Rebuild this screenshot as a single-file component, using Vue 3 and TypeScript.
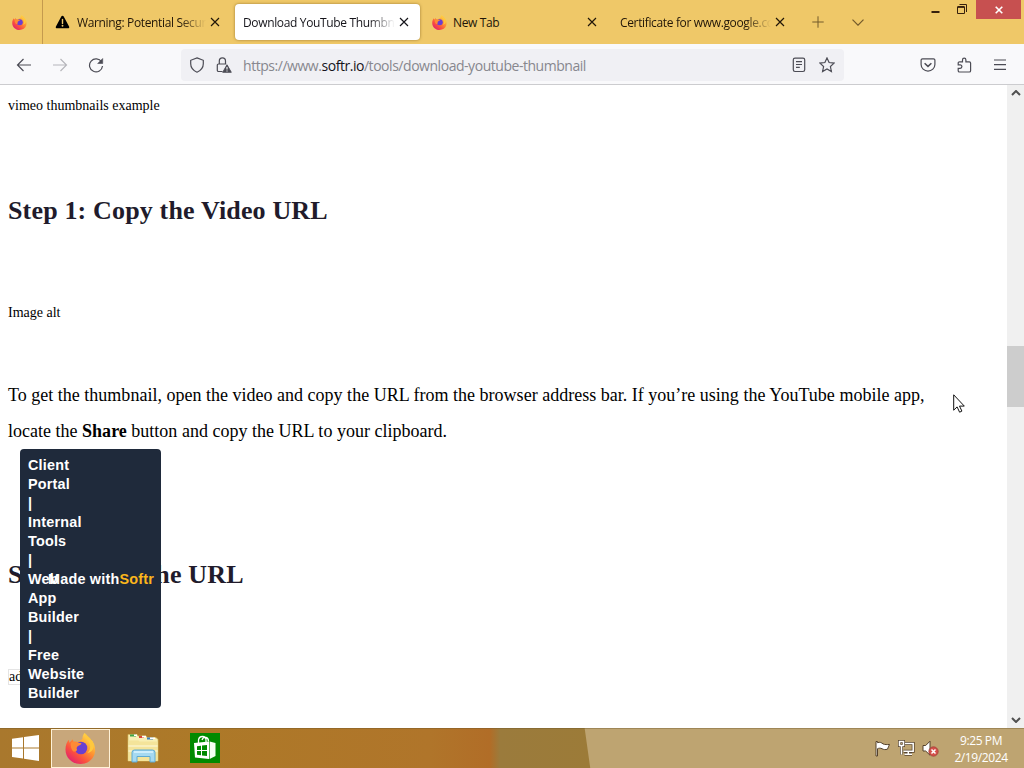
<template>
  <div class="screen">
    <header class="tabbar">
      <div class="pinned"><FirefoxIcon class="tab-fox" /></div>
      <div
        v-for="tab in tabs"
        :key="tab.title"
        :class="['tab', tab.size, { active: tab.active }]"
      >
        <svg v-if="tab.icon === 'warning'" class="warn" viewBox="0 0 16 16">
          <path
            d="M8 1.2c.6 0 1 .3 1.3.8l5.7 10.8c.6 1.1 0 1.9-1.2 1.9H2.2C1 14.7.4 13.9 1 12.8L6.7 2c.3-.5.7-.8 1.3-.8z"
          />
          <path d="M8 5.3v4.2" stroke="#f0c96b" stroke-width="1.5" stroke-linecap="round" />
          <circle cx="8" cy="12" r="1" fill="#f0c96b" />
        </svg>
        <FirefoxIcon v-if="tab.icon === 'firefox'" class="tab-fox" />
        <span :class="['tab-title', { faded: tab.faded }]">{{ tab.title }}</span>
        <svg class="tab-close" viewBox="0 0 10 10"><path d="M1 1l8 8M9 1L1 9" /></svg>
      </div>
      <svg class="new-tab" viewBox="0 0 12 12"><path d="M6 .3v11.4M.3 6h11.4" /></svg>
      <svg class="all-tabs" viewBox="0 0 12 7"><path d="M.5.7L6 6.2 11.5.7" /></svg>
      <div class="win-controls">
        <svg class="minimize" viewBox="0 0 8 2"><path d="M0 1h8" /></svg>
        <svg class="restore" viewBox="0 0 10 10">
          <path d="M.5 3h7v6.5h-7z" />
          <path d="M.5 2.9h7" stroke-width="1.8" />
          <path d="M2.5.5h7V8" />
        </svg>
        <button class="win-close">
          <svg viewBox="0 0 8 8"><path d="M.7.7l6.6 6.6M7.3.7L.7 7.3" /></svg>
        </button>
      </div>
    </header>

    <nav class="toolbar">
      <svg class="icon back" viewBox="0 0 16 16"><path d="M15 8H1.5M7.5 2l-6 6 6 6" /></svg>
      <svg class="icon forward" viewBox="0 0 16 16"><path d="M1 8h13.5M8.5 2l6 6-6 6" /></svg>
      <svg class="icon reload" viewBox="0 0 16 16">
        <path d="M13.6 5A6.5 6.5 0 1 0 14.500 9" />
        <path d="M14.7 1.500v5h-5z" fill="#4c4c55" stroke-width=".6" />
      </svg>
      <div class="urlbar">
        <svg class="icon shield" viewBox="0 0 16 16">
          <path d="M8 .9l6.3 2.4v3.5c0 3.9-2.4 6.7-6.3 8.4-3.9-1.7-6.3-4.5-6.3-8.4V3.300z" />
        </svg>
        <svg class="icon lock" viewBox="0 0 16 16">
          <path d="M6.5 14.5h-4a1.2 1.2 0 0 1-1.2-1.2V8.200A1.200 1.200 0 0 1 2.500 7h7.800M3.300 7V4a3 3 0 0 1 6.200 0v3" />
          <path d="M11 7.800l4.300 7.500H6.700z" fill="#4c4c55" stroke-width=".9" stroke-linejoin="round" />
          <path d="M11 10v2.500M11 13.400v1" stroke="#fff" stroke-width="1.1" />
        </svg>
        <span class="url">https://www.<b>softr.io</b>/tools/download-youtube-thumbnail</span>
        <svg class="icon reader" viewBox="0 0 16 16">
          <rect x="2.3" y="1.1" width="11.4" height="13.4" rx="1.7" />
          <path d="M5 4.700h6M5 7.500h6M5 10.300h3.800" />
        </svg>
        <svg class="icon star" viewBox="0 0 16 16">
          <path d="M8 .9l2.100 4.600 5 .6-3.700 3.400 1 5L8 12l-4.400 2.500 1-5L.9 6.100l5-.6z" />
        </svg>
      </div>
      <svg class="icon pocket" viewBox="0 0 16 16">
        <path d="M2.500 1.800h11a1.400 1.400 0 0 1 1.400 1.400v4.300a6.900 6.600 0 0 1-13.800 0V3.200a1.400 1.400 0 0 1 1.400-1.400z" />
        <path d="M4.600 6.200L8 9.400l3.400-3.200" stroke-width="1.5" />
      </svg>
      <svg class="icon puzzle" viewBox="0 0 16 16">
        <path
          d="M3.500 4.800h3V2.900a1.700 1.700 0 0 1 3.400 0v1.900h3.400a1.300 1.300 0 0 1 1.300 1.300v7.600a1.300 1.300 0 0 1-1.300 1.300H3.500a1.300 1.300 0 0 1-1.300-1.300v-2.400h2a1.700 1.700 0 0 0 0-3.400h-2V6.100a1.300 1.300 0 0 1 1.300-1.300z"
        />
      </svg>
      <svg class="icon menu" viewBox="0 0 16 16"><path d="M2 3h12M2 7.700h12M2 12.400h12" /></svg>
    </nav>

    <main class="viewport">
      <article class="page">
        <p class="alt">vimeo thumbnails example</p>
        <h2>Step 1: Copy the Video URL</h2>
        <p class="alt alt-image">Image alt</p>
        <p class="body">
          To get the thumbnail, open the video and copy the URL from the browser address bar. If
          you’re using the YouTube mobile app,<br />locate the <b>Share</b> button and copy the URL
          to your clipboard.
        </p>
        <h2 class="step-add">Step 2: Add the URL</h2>
        <p class="alt alt-add">ad</p>
      </article>
      <aside class="badge">
        <span v-for="(line, i) in badgeLines" :key="i">{{ line }}</span>
        <div class="made">Made with<em>Softr</em></div>
      </aside>
      <div class="scrollbar">
        <svg viewBox="0 0 10 6"><path d="M1 5l4-4 4 4" /></svg>
        <div class="thumb"></div>
        <svg viewBox="0 0 10 6"><path d="M1 1l4 4 4-4" /></svg>
      </div>
      <svg class="cursor" viewBox="0 0 12 19">
        <path d="M.7.8v15.400l3.400-3.300 2.500 5.300 2.300-1.100-2.400-5h4.800z" />
      </svg>
    </main>

    <footer class="taskbar">
      <svg class="start" viewBox="0 0 27 26">
        <path d="M0 3.800l11-1.600v10.200H0zM12 2l15-2v12.400H12zM0 13.400h11v10.200L0 22zM12 13.400h15V26l-15-2.200z" />
      </svg>
      <div class="task-active"><FirefoxIcon class="task-fox" /></div>
      <svg class="explorer" viewBox="0 0 32 30">
        <path d="M1 4V1.500h9L11 3h8l1 1.500h9l2 2V28H1z" fill="#f8efb3" stroke="#d3b75c" stroke-width=".7" />
        <path d="M3 1.500h6v2H3z" fill="#3da547" />
        <path d="M12 3h5v2h-5z" fill="#d84635" />
        <path d="M20 4.500h6v2h-6z" fill="#3c7fc0" />
        <path d="M7 2.200h3M15 3.600h4M23 5.200h5" stroke="#fff" stroke-width="1.6" />
        <path d="M1.500 7.500h10l1 1h18V28h-29z" fill="#f4e49a" />
        <path d="M1.500 13h29M1.500 18h29" stroke="#f9efbd" stroke-width="2" />
        <path d="M5 29V19.500q0-2.500 2.500-2.500h18q2.500 0 2.500 2.500V29h-5v-5.500H10V29z" fill="#a5d9f1" stroke="#5eaad2" />
        <path d="M7 19h19" stroke="#ddf5ff" stroke-width="1.5" />
      </svg>
      <svg class="store" viewBox="0 0 30 30">
        <path d="M0 0h30v30H0z" fill="#008a00" />
        <path d="M4 10l15-1.500V26L5 24.500z" fill="#fff" />
        <path d="M19.600 8.500L25.500 10v13l-5.900 3z" fill="#f4fff2" />
        <path d="M8.500 10V7q.5-3.500 4-3.500T16 7v2.500M12 7q1-3 4-2.500 2.500.5 2.500 4" fill="none" stroke="#fff" stroke-width="1.3" />
        <path d="M7 13.200l4-.5v4.400H7zM12 12.600l5-.6v5.100h-5zM7 18h4v4.200l-4-.4zM12 18h5v5l-5-.6z" fill="#008a00" />
      </svg>
      <div class="tray">
        <svg class="flag" viewBox="0 0 17 17">
          <path d="M2 16V1.500h1.500v1.200c2.500-1 4 0 5.500 1.200 2 .8 4 .8 6.500.5-1 2-1.200 3-2 4.800-2 .6-4 .5-5.500-.5-1.500-.7-3-.7-4.500 0V16z" />
        </svg>
        <svg class="network" viewBox="0 0 17 17">
          <g fill="none">
            <path d="M5.500 3.500h9.700v7.700H5.500M10.300 11.200v3M6.500 14.300h7.500" stroke="#55422c" stroke-width="3" />
            <path d="M5.500 3.500h9.700v7.700H5.500M10.300 11.200v3M6.500 14.300h7.500" stroke="#fff" stroke-width="1.5" />
            <path d="M1.500 1.500h4v4h-4zM3.500 5.500v9" stroke="#55422c" stroke-width="3" />
            <path d="M1.500 1.500h4v4h-4zM3.500 5.500v9" stroke="#fff" stroke-width="1.6" />
          </g>
        </svg>
        <svg class="sound" viewBox="0 0 17 17">
          <path d="M1 5.500h2.700L8 1.200v14L3.700 11H1z" fill="#fff" stroke="#55422c" />
          <circle cx="11.5" cy="11.5" r="4.700" fill="#d4514b" stroke="#9c3a34" stroke-width=".7" />
          <path d="M9.500 9.500l4 4M13.500 9.500l-4 4" stroke="#fff" stroke-width="1.5" />
        </svg>
        <div class="clock"><span>9:25 PM</span><span>2/19/2024</span></div>
      </div>
    </footer>
  </div>
</template>

<script setup lang="ts">
import { defineComponent, h } from 'vue'

interface Tab {
  title: string
  size: string
  icon?: 'warning' | 'firefox'
  active?: boolean
  faded?: boolean
}

const tabs: Tab[] = [
  { title: 'Warning: Potential Security', size: 'tab-warning', icon: 'warning', faded: true },
  { title: 'Download YouTube Thumbnails', size: 'tab-softr', active: true, faded: true },
  { title: 'New Tab', size: 'tab-plain', icon: 'firefox' },
  { title: 'Certificate for www.google.com', size: 'tab-plain', faded: true },
]

const badgeLines = [
  'Client', 'Portal', '|', 'Internal', 'Tools', '|', 'Web',
  'App', 'Builder', '|', 'Free', 'Website', 'Builder',
]

const FirefoxIcon = defineComponent(() => () =>
  h('svg', { viewBox: '0 0 32 32' }, [
    h('defs', [
      h('linearGradient', { id: 'fox-body', x1: '0.85', y1: '0.1', x2: '0.2', y2: '0.9' }, [
        h('stop', { offset: '0', 'stop-color': '#ffe14d' }),
        h('stop', { offset: '.4', 'stop-color': '#ff9430' }),
        h('stop', { offset: '.75', 'stop-color': '#fa4d40' }),
        h('stop', { offset: '1', 'stop-color': '#e52868' }),
      ]),
    ]),
    h('path', {
      fill: 'url(#fox-body)',
      d: 'M20 0c3 2 4 5 6 7l2 1c3 4 4 9 2.5 14C28.500 28 23 32 16 32 7 32 .5 25.500.5 17 .5 13 2 9 4 7l.5 3L8 6.500l1 3 4 .5c2-3 4-2 5-4 0-2 .5-4 2-6z',
    }),
    h('circle', { cx: '16.5', cy: '15.5', r: '6.5', fill: '#6a3fd0' }),
    h('path', {
      fill: '#ff8a34',
      d: 'M6 10c3-2 6-1 8 0l3 .5c0 1.500-2.500 2-3.500 3-1.500 1-2 2.500-1 4-1 1.500-2.500 2-4 1.500C6.500 17 5.500 13 6 10z',
    }),
    h('path', { fill: '#ffc83d', d: 'M20 0c1 5 6 8 6 14 0 3-1 5-3 7 8-2 8-10 4-14-1-2-4-4-7-7z' }),
  ]),
)
</script>

<style scoped>
.screen {
  width: 1024px;
  height: 768px;
  overflow: hidden;
  display: flex;
  flex-direction: column;
  background: #fff;
  font-family: 'Open Sans', 'Noto Sans', sans-serif;
}

svg {
  display: block;
  flex: none;
}

.tabbar {
  height: 44px;
  flex: none;
  display: flex;
  align-items: center;
  background: #efc868;
  color: #211608;
}

.pinned {
  width: 43px;
  flex: none;
  height: 44px;
  box-sizing: border-box;
  border-right: 1px solid #c49a4e;
  padding: 15px 0 0 12px;
}

.tab-fox {
  width: 15px;
  height: 15px;
  margin-right: 6px;
}

.tab {
  display: flex;
  flex: none;
  align-items: center;
  height: 36px;
  box-sizing: border-box;
  font-size: 12px;
  letter-spacing: -0.35px;
}

.tab.active {
  background: #fff;
  border-radius: 4px;
  box-shadow: 0 0 3px rgba(100, 70, 10, 0.6);
  color: #15141a;
}

.tab-warning {
  width: 192px;
  padding: 0 15px 0 12px;
}

.tab-softr {
  width: 185px;
  padding: 0 11px 0 8px;
}

.tab-plain {
  width: 188px;
  padding: 0 11px 0 12px;
}

.warn {
  width: 15px;
  height: 16px;
  margin-right: 7px;
}

.tab-title {
  flex: 1;
  min-width: 0;
  overflow: hidden;
  white-space: nowrap;
  margin-right: 4px;
}

.tab-title.faded {
  mask-image: linear-gradient(to left, transparent, #000 26px);
}

.tab-close {
  width: 10px;
  height: 10px;
  fill: none;
  stroke: currentColor;
  stroke-width: 1.15;
}

.new-tab {
  width: 12px;
  height: 12px;
  margin-left: 16px;
  fill: none;
  stroke: #725a2b;
}

.all-tabs {
  width: 12px;
  height: 7px;
  margin-left: 28px;
  fill: none;
  stroke: #725a2b;
  stroke-width: 1.2;
}

.win-controls {
  display: flex;
  margin-left: auto;
  align-self: flex-start;
  fill: none;
  stroke: #36200d;
}

.minimize {
  width: 9px;
  height: 2px;
  margin: 11px 17px 0 0;
  stroke-width: 2;
}

.restore {
  width: 10px;
  height: 10px;
  margin: 4px 9px 0 0;
}

.win-close {
  width: 45px;
  height: 19px;
  padding: 0;
  border: 0;
  background: #c75050;
  display: flex;
  align-items: center;
  justify-content: center;
  margin-right: 3px;
}

.win-close svg {
  width: 8px;
  height: 8px;
  fill: none;
  stroke: #fff;
  stroke-width: 1.6;
}

.toolbar {
  height: 41px;
  flex: none;
  box-sizing: border-box;
  display: flex;
  align-items: center;
  background: #f9f9fb;
  border-bottom: 1px solid #cccccf;
  padding: 1px 16px 0;
}

.icon {
  width: 16px;
  height: 16px;
  fill: none;
  stroke: #4c4c55;
  stroke-width: 1.2;
}

.forward {
  margin-left: 20px;
  opacity: 0.38;
}

.reload {
  margin-left: 20px;
}

.urlbar {
  width: 663px;
  height: 32px;
  box-sizing: border-box;
  margin: 0 76px 0 77px;
  padding: 0 9px 0 8px;
  display: flex;
  align-items: center;
  background: #f0f0f4;
  border-radius: 4px;
}

.lock {
  margin-left: 11px;
}

.url {
  flex: 1;
  margin-left: 11px;
  padding-top: 1px;
  color: #87878e;
  font-size: 14px;
  letter-spacing: -0.46px;
  white-space: nowrap;
}

.url b {
  font-weight: 400;
  color: #15141a;
}

.star {
  margin-left: 12px;
}

.puzzle {
  margin-left: 20px;
}

.menu {
  margin-left: 20px;
}

.viewport {
  flex: 1;
  min-height: 0;
  display: flex;
  position: relative;
  background: #fff;
}

.page {
  flex: 1;
  padding: 13px 8px 0;
  font-family: 'Liberation Serif', serif;
  color: #000;
  overflow: hidden;
}

.alt {
  margin: 0;
  font-size: 14px;
  line-height: 16px;
}

h2 {
  margin: 81px 0 0;
  font-size: 26px;
  line-height: 32px;
  letter-spacing: 0.16px;
  color: #211b2b;
}

.alt-image {
  margin-top: 78px;
}

.body {
  margin: 56px 0 0;
  font-size: 18px;
  line-height: 36px;
  letter-spacing: 0.01px;
  white-space: nowrap;
}

.step-add {
  margin-top: 110px;
}

.alt-add {
  width: 28px;
  margin-top: 78px;
  padding-left: 1px;
  outline: 1px solid #e4e4e4;
  outline-offset: -1px;
}

.badge {
  position: absolute;
  left: 20px;
  top: 364px;
  width: 141px;
  height: 259px;
  box-sizing: border-box;
  padding: 7px 8px;
  display: flex;
  flex-direction: column;
  background: #1f2a3b;
  border-radius: 4px;
  color: #fff;
  font: bold 14.4px/19px 'Liberation Sans', Arial, sans-serif;
  letter-spacing: 0.2px;
}

.made {
  position: absolute;
  right: 7px;
  top: 121px;
  white-space: nowrap;
}

.made em {
  font-style: normal;
  color: #fbb61c;
}

.scrollbar {
  width: 17px;
  box-sizing: border-box;
  padding: 5px 0;
  display: flex;
  flex-direction: column;
  align-items: center;
  background: #f0f0f0;
}

.scrollbar svg {
  width: 10px;
  height: 6px;
  fill: none;
  stroke: #505050;
  stroke-width: 2;
}

.thumb {
  width: 17px;
  height: 61px;
  margin: 250px 0 auto;
  background: #cdcdcd;
}

.cursor {
  position: absolute;
  left: 953px;
  top: 309px;
  width: 12px;
  height: 19px;
  fill: #fff;
  stroke: #111;
}

.taskbar {
  height: 40px;
  flex: none;
  display: flex;
  align-items: center;
  background:
    linear-gradient(82deg, transparent 584px, #bea471 585px),
    linear-gradient(90deg, #a9782d, #ad7928 200px, #b0752a 430px, #b16d27 490px, #9b7b3c 500px, #9c7b38 590px, #9c7b38);
  box-shadow: inset 0 1px rgba(100, 80, 40, 0.35);
}

.start {
  width: 27px;
  height: 26px;
  margin-left: 12px;
  fill: #fff;
}

.task-active {
  width: 59px;
  height: 39px;
  margin: 0 0 0 12px;
  box-sizing: border-box;
  border: 1px solid #fff2d8;
  background: #c8a77b;
  display: flex;
  align-items: center;
  justify-content: center;
}

.task-fox {
  width: 31px;
  height: 31px;
}

.explorer {
  width: 32px;
  height: 30px;
  margin-left: 17px;
}

.store {
  width: 30px;
  height: 30px;
  margin-left: 31px;
}

.tray {
  margin-left: auto;
  display: flex;
  align-items: center;
}

.tray svg {
  width: 17px;
  height: 17px;
  margin-right: 7px;
}

.flag {
  fill: #fff;
  stroke: #55422c;
}

.clock {
  width: 54px;
  margin: 1px 16px 0 8px;
  display: flex;
  flex-direction: column;
  align-items: center;
  font-size: 12px;
  line-height: 17px;
  letter-spacing: -0.4px;
  color: #fff;
  white-space: nowrap;
}
</style>

<style>
body {
  margin: 0;
  overflow: hidden;
}
</style>
